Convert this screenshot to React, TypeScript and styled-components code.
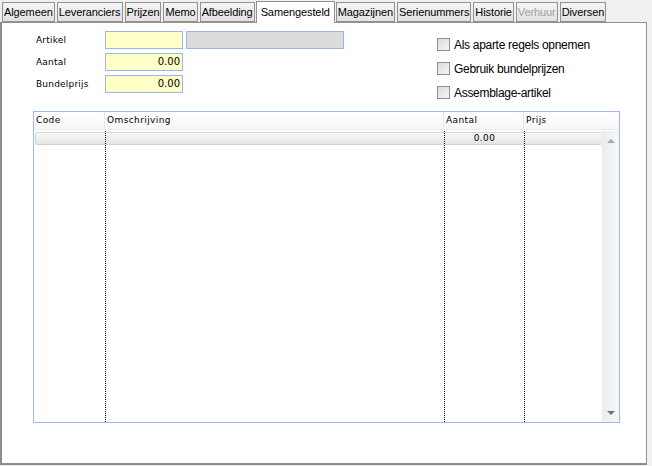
import React from 'react';
import styled, {createGlobalStyle} from 'styled-components';

const GlobalStyle = createGlobalStyle`
    html, body {
        margin: 0;
        padding: 0;
        background: #f0f0f0;
    }
    body {
        font-family: "Liberation Sans", Arial, sans-serif;
    }
`;

const tabs = ['Algemeen', 'Leveranciers', 'Prijzen', 'Memo', 'Afbeelding', 'Samengesteld', 'Magazijnen', 'Serienummers', 'Historie', 'Verhuur', 'Diversen'];
const activeTab = 'Samengesteld';
const disabledTabs = ['Verhuur'];

const fields = [
    {label: 'Artikel', value: '', extra: true},
    {label: 'Aantal', value: '0.00', extra: false},
    {label: 'Bundelprijs', value: '0.00', extra: false},
];

const options = ['Als aparte regels opnemen', 'Gebruik bundelprijzen', 'Assemblage-artikel'];

const columns = [
    {title: 'Code', width: 71, value: ''},
    {title: 'Omschrijving', width: 339, value: ''},
    {title: 'Aantal', width: 80, value: '0.00'},
    {title: 'Prijs', width: 78, value: ''},
];

const App: React.FunctionComponent = () => {
    return (
        <>
            <GlobalStyle/>
            <Window>
                <TabBar>
                    {tabs.map(tab => (
                        <Tab key={tab} $active={tab === activeTab} $disabled={disabledTabs.includes(tab)}>{tab}</Tab>
                    ))}
                </TabBar>
                <Panel>
                    <FormArea>
                        <Fields>
                            {fields.map(field => (
                                <FieldRow key={field.label}>
                                    <Label>{field.label}</Label>
                                    <Input $align={field.value ? 'right' : 'left'}>{field.value}</Input>
                                    {field.extra && <ReadOnlyInput/>}
                                </FieldRow>
                            ))}
                        </Fields>
                        <Options>
                            {options.map(option => (
                                <Option key={option}>
                                    <CheckBox/>
                                    <span>{option}</span>
                                </Option>
                            ))}
                        </Options>
                    </FormArea>
                    <Grid>
                        <HeaderRow>
                            {columns.map((column, index) => (
                                <HeaderCell key={column.title} style={{width: column.width}} $last={index === columns.length - 1}>{column.title}</HeaderCell>
                            ))}
                            <HeaderFiller/>
                        </HeaderRow>
                        <Body>
                            {columns.map((column, index) => (
                                <Column key={column.title} style={{width: column.width}} $first={index === 0}>
                                    <RowCell $first={index === 0} $last={index === columns.length - 1}>{column.value}</RowCell>
                                </Column>
                            ))}
                            <ScrollBar>
                                <Arrow $up/>
                                <Arrow $up={false}/>
                            </ScrollBar>
                        </Body>
                    </Grid>
                </Panel>
            </Window>
        </>
    );
}

const Window = styled.div`
    width: 652px;
    height: 466px;
    background: #f0f0f0;
    display: flex;
    flex-direction: column;
    overflow: hidden;
`;

const TabBar = styled.div`
    display: flex;
    align-items: flex-end;
    height: 23px;
    padding-left: 2px;
    position: relative;
    z-index: 1;
`;

const Tab = styled.div<{$active: boolean; $disabled: boolean}>`
    box-sizing: border-box;
    height: ${props => props.$active ? '22px' : '20px'};
    padding: ${props => props.$active ? '3px 4px 0 4px' : '2px 1px 0 1px'};
    margin: ${props => props.$active ? '0 1px 0 -1px' : '0 2px 1px 0'};
    border: 1px solid #919191;
    border-bottom: ${props => props.$active ? 'none' : '1px solid #919191'};
    background: ${props => props.$active ? '#ffffff' : 'linear-gradient(#f4f4f4, #e2e2e2)'};
    color: ${props => props.$disabled ? '#a0a0a0' : '#000000'};
    font-size: 11px;
    letter-spacing: -0.1px;
    line-height: 15px;
    white-space: nowrap;
`;

const Panel = styled.div`
    box-sizing: border-box;
    width: 647px;
    height: 443px;
    margin-top: -1px;
    background: #ffffff;
    border: 1px solid #919191;
    border-left: 2px solid #8c8c8c;
    border-bottom: 2px solid #8c8c8c;
    padding: 8px 0 0 31px;
`;

const FormArea = styled.div`
    display: flex;
    width: 587px;
    height: 62px;
`;

const Fields = styled.div`
    display: flex;
    flex-direction: column;
    gap: 4px;
    width: 404px;
`;

const FieldRow = styled.div`
    display: flex;
    align-items: center;
    height: 18px;
`;

const Label = styled.div`
    width: 72px;
    padding-left: 3px;
    box-sizing: border-box;
    font-family: "DejaVu Sans", sans-serif;
    font-size: 9px;
    letter-spacing: 0.2px;
    color: #000;
`;

const Input = styled.div<{$align: string}>`
    box-sizing: border-box;
    width: 78px;
    height: 18px;
    background: #ffffc8;
    border: 1px solid #9db6e8;
    font-family: "DejaVu Sans", sans-serif;
    font-size: 10px;
    line-height: 16px;
    text-align: ${props => props.$align};
    padding: 0 2px;
`;

const ReadOnlyInput = styled.div`
    box-sizing: border-box;
    width: 158px;
    height: 18px;
    margin-left: 3px;
    background: #dcdcdc;
    border: 1px solid #9db6e8;
`;

const Options = styled.div`
    display: flex;
    flex-direction: column;
    gap: 11px;
    padding-top: 7px;
`;

const Option = styled.label`
    display: flex;
    align-items: center;
    gap: 4px;
    height: 13px;
    font-size: 12px;
    letter-spacing: -0.3px;
    color: #000;
`;

const CheckBox = styled.span`
    box-sizing: border-box;
    width: 13px;
    height: 13px;
    border: 1px solid #8e8f8f;
    background: linear-gradient(135deg, #dcdcdc, #f6f6f6);
`;

const Grid = styled.div`
    box-sizing: border-box;
    width: 587px;
    height: 312px;
    margin-top: 18px;
    border: 1px solid #9bb9ef;
    display: flex;
    flex-direction: column;
`;

const HeaderRow = styled.div`
    display: flex;
    height: 17px;
    background: linear-gradient(#ffffff, #f6f6f6);
    border-bottom: 1px solid #ececec;
`;

const HeaderCell = styled.div<{$last: boolean}>`
    box-sizing: border-box;
    padding: 3px 0 0 2px;
    border-right: ${props => props.$last ? 'none' : '1px solid #e6e6e6'};
    font-family: "DejaVu Sans", sans-serif;
    font-size: 9px;
    letter-spacing: 0.4px;
    color: #000;
`;

const HeaderFiller = styled.div`
    flex: 1;
`;

const Body = styled.div`
    flex: 1;
    display: flex;
    padding-top: 1px;
`;

const Column = styled.div<{$first: boolean}>`
    box-sizing: border-box;
    border-left: ${props => props.$first ? 'none' : '1px dotted #000'};
    padding-top: 1px;
`;

const RowCell = styled.div<{$first: boolean; $last: boolean}>`
    box-sizing: border-box;
    height: 13px;
    margin-left: ${props => props.$first ? '1px' : '0'};
    background: linear-gradient(#f8f8f8, #e4e4e4);
    border-top: 1px solid #d6d6d6;
    border-bottom: 1px solid #d0d0d0;
    border-left: ${props => props.$first ? '1px solid #d0d0d0' : 'none'};
    border-radius: ${props => props.$first ? '3px 0 0 3px' : props.$last ? '0 3px 3px 0' : '0'};
    font-family: "DejaVu Sans", sans-serif;
    font-size: 9px;
    line-height: 11px;
    text-align: center;
    letter-spacing: 0.4px;
`;

const ScrollBar = styled.div`
    flex: 1;
    background: linear-gradient(90deg, #ececec, #f6f6f6);
    display: flex;
    flex-direction: column;
    justify-content: space-between;
    align-items: center;
    padding: 8px 0 7px;
`;

const Arrow = styled.div<{$up: boolean}>`
    width: 0;
    height: 0;
    border-left: 4px solid transparent;
    border-right: 4px solid transparent;
    border-bottom: ${props => props.$up ? '4px solid #a8a8a8' : 'none'};
    border-top: ${props => props.$up ? 'none' : '4px solid #707070'};
`;

export default App;
